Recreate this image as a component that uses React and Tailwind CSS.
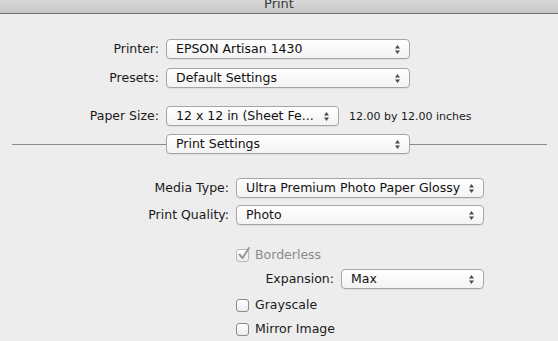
import React from 'react';

// Mac-style print dialog panel

function Arrows() {
  return (
    <svg width="7" height="11" viewBox="0 0 7 11" className="shrink-0">
      <path d="M3.5 1 L6 4.5 L1 4.5 Z" fill="#4a4a4a" />
      <path d="M3.5 10 L6 6.5 L1 6.5 Z" fill="#4a4a4a" />
    </svg>
  );
}

function Popup({ value, width }) {
  return (
    <div
      className="h-[20px] flex items-center justify-between pl-[9px] pr-[8px] rounded-[4px] border border-[#a5a5a5] bg-gradient-to-b from-[#ffffff] to-[#f3f3f3] shadow-[0_1px_0_rgba(0,0,0,0.06)] text-[#111] text-[12.5px]"
      style={{ width }}
    >
      <span className="whitespace-nowrap">{value}</span>
      <Arrows />
    </div>
  );
}

function Row({ label, labelWidth, children, className = '' }) {
  return (
    <div className={`flex items-center ${className}`}>
      <div className="text-right pr-[7px] text-[#1a1a1a] whitespace-nowrap" style={{ width: labelWidth }}>
        {label}
      </div>
      {children}
    </div>
  );
}

function Checkbox({ checked, disabled, label, className = '' }) {
  return (
    <div className={`flex items-center ml-[236px] ${className}`}>
      <div className={`w-[13px] h-[13px] rounded-[3px] border ${disabled ? 'border-[#b8b8b8]' : 'border-[#8c8c8c]'} bg-gradient-to-b from-[#ffffff] to-[#ececec] relative`}>
        {checked && (
          <svg width="16" height="16" viewBox="0 0 16 16" className="absolute left-[0px] top-[-4px]">
            <path d="M2.5 8.5 L5.5 12 L12 2" stroke={disabled ? '#9a9a9a' : '#222'} strokeWidth="2" fill="none" strokeLinecap="round" strokeLinejoin="round" />
          </svg>
        )}
      </div>
      <span className={`ml-[6px] ${disabled ? 'text-[#8a8a8a]' : 'text-[#1a1a1a]'}`}>{label}</span>
    </div>
  );
}

export default function App() {
  return (
    <div className="w-[558px] h-[341px] overflow-hidden bg-[#ededed] text-[12.5px] leading-none" style={{ fontFamily: '"DejaVu Sans", "Liberation Sans", sans-serif' }}>
      <div className="h-[14px] border-b border-[#6e6e6e] bg-gradient-to-b from-[#d9d9d9] to-[#c6c6c6] flex items-end justify-center overflow-hidden">
        <span className="text-[#3a3a3a] text-[13px] mb-[3px]">Print</span>
      </div>

      <Row label="Printer:" labelWidth={166} className="mt-[25px]">
        <Popup value="EPSON Artisan 1430" width={244} />
      </Row>
      <Row label="Presets:" labelWidth={166} className="mt-[9px]">
        <Popup value="Default Settings" width={244} />
      </Row>
      <Row label="Paper Size:" labelWidth={166} className="mt-[18px]">
        <Popup value="12 x 12 in (Sheet Fe..." width={173} />
        <span className="ml-[10px] text-[11px] text-[#1a1a1a]">12.00 by 12.00 inches</span>
      </Row>

      <div className="flex items-center mt-[8px]">
        <div className="ml-[12px] w-[154px] h-px bg-[#8a8a8a]" />
        <Popup value="Print Settings" width={244} />
        <div className="w-[137px] h-px bg-[#8a8a8a]" />
      </div>

      <Row label="Media Type:" labelWidth={236} className="mt-[24px]">
        <Popup value="Ultra Premium Photo Paper Glossy" width={248} />
      </Row>
      <Row label="Print Quality:" labelWidth={236} className="mt-[7px]">
        <Popup value="Photo" width={248} />
      </Row>

      <Checkbox checked disabled label="Borderless" className="mt-[24px]" />
      <Row label="Expansion:" labelWidth={341} className="mt-[7px]">
        <Popup value="Max" width={143} />
      </Row>
      <Checkbox label="Grayscale" className="mt-[10px]" />
      <Checkbox label="Mirror Image" className="mt-[11px]" />
    </div>
  );
}
